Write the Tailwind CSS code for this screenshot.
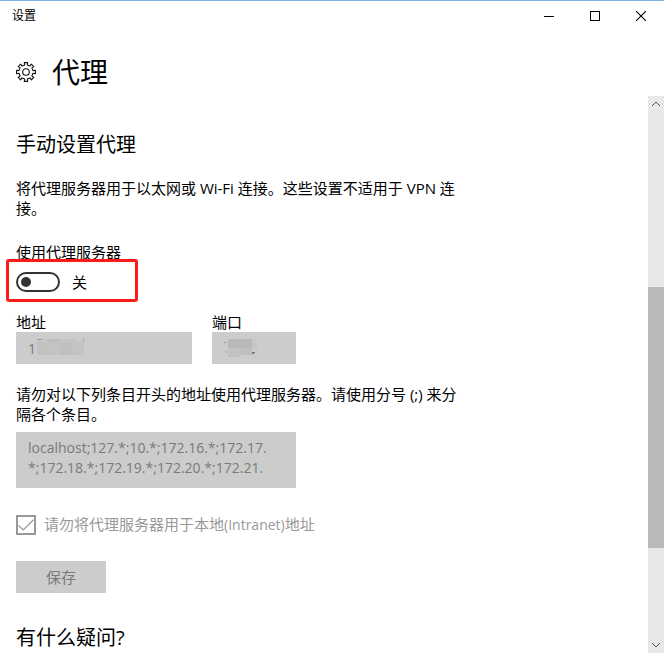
<!DOCTYPE html>
<html lang="zh-CN">
<head>
  <meta charset="UTF-8">
  <meta name="viewport" content="width=device-width, initial-scale=1">
  <title>设置</title>
  <script src="https://cdn.jsdelivr.net/npm/@tailwindcss/browser@4"></script>
</head>
<body class="bg-white text-black h-screen flex flex-col overflow-hidden border-t border-[#7db4ee] font-['Open_Sans','Noto_Sans_CJK_SC',sans-serif] text-[15px] leading-5">
  <!-- Title bar -->
  <header class="flex h-[30px] shrink-0 items-center justify-between">
    <span class="pl-3 text-xs">设置</span>
    <div class="flex h-full">
      <button type="button" aria-label="最小化" class="w-[46px] h-full flex items-center justify-center">
        <svg class="w-[10px] h-[10px]" viewBox="0 0 10 10" shape-rendering="crispEdges"><path d="M0 5.5H10" stroke="#000"/></svg>
      </button>
      <button type="button" aria-label="最大化" class="w-[46px] h-full flex items-center justify-center">
        <svg class="w-[10px] h-[10px]" viewBox="0 0 10 10" shape-rendering="crispEdges"><path d="M.5 .5H9.5V9.5H.5Z" fill="none" stroke="#000"/></svg>
      </button>
      <button type="button" aria-label="关闭" class="w-[46px] h-full flex items-center justify-center">
        <svg class="w-[10px] h-[10px]" viewBox="0 0 10 10"><path d="M0 0L10 10M10 0L0 10" stroke="#000" stroke-width="1.1"/></svg>
      </button>
    </div>
  </header>

  <div class="flex h-[65px] shrink-0 items-start gap-4 px-4 pt-[21px]">
    <svg class="mt-[10px] w-5 h-5" viewBox="0 0 20 20" fill="none" stroke="#111" stroke-width="1.1" stroke-linejoin="round">
      <path d="M8.7 2.9L8.3 .6H11.7L11.3 2.9L14 4L15.3 2.1L17.8 4.6L15.9 5.9L17 8.6L19.4 8.3V11.7L17 11.3L15.9 14L17.8 15.4L15.4 17.8L14 15.9L11.3 17L11.7 19.4H8.3L8.7 17L6 15.9L4.6 17.8L2.2 15.4L4.1 14L3 11.3L.6 11.7V8.3L3 8.6L4.1 5.9L2.2 4.6L4.7 2.1L6 4Z"/>
      <circle cx="10" cy="10" r="3.3"/>
    </svg>
    <h1 class="text-[28px] leading-10">代理</h1>
  </div>

  <div class="flex min-h-0 flex-1">
    <main class="min-w-0 flex-1 overflow-hidden px-4 pt-[37px]">
      <form class="max-w-[444px]">
        <h2 class="text-xl leading-6">手动设置代理</h2>
        <p class="mt-[21px]">将代理服务器用于以太网或 Wi-Fi 连接。这些设置不适用于 VPN 连接。</p>

        <div class="relative mt-6 w-fit">
          <label for="useProxy" class="block">使用代理服务器</label>
          <div class="mt-[10px] flex h-5 items-center gap-3">
            <span class="relative block w-11 h-5">
              <input type="checkbox" role="switch" id="useProxy" class="block w-11 h-5 appearance-none rounded-full border-2 border-[#333]">
              <span class="pointer-events-none absolute left-[5px] top-[5px] w-[10px] h-[10px] rounded-full bg-[#333]"></span>
            </span>
            <span>关</span>
          </div>
          <!-- highlight around the switch -->
          <div class="pointer-events-none absolute -left-[10px] top-[17px] w-[132px] h-[43px] rounded-[3px] border-3 border-[#fb1c18]"></div>
        </div>

        <div class="mt-5 flex gap-5">
          <div class="relative w-[176px]">
            <label for="address" class="block">地址</label>
            <input id="address" type="text" value="1" disabled class="block w-full h-8 bg-[#ccc] px-3 text-sm text-[#7a7a7a]">
            <svg class="absolute left-[21px] top-[26px] w-[48px] h-[18px]" viewBox="0 0 48 18" shape-rendering="crispEdges">
              <path d="M0 1H5V2H0ZM46 1H47V3H46Z" fill="#999"/>
              <path d="M0 3H47V17H0Z" fill="#c3c3c3"/>
              <path d="M8 1H38V5H8Z" fill="#c4c4c4"/>
              <path d="M11 1H23V5H11ZM23 5H35V17H23Z" fill="#bfbfbf"/>
              <path d="M0 5H11V17H0Z" fill="#c1c1c1"/>
            </svg>
          </div>
          <div class="relative w-[84px]">
            <label for="port" class="block">端口</label>
            <input id="port" type="text" disabled class="block w-full h-8 bg-[#ccc] px-3 text-sm text-[#7a7a7a]">
            <svg class="absolute left-3 top-[26px] w-[34px] h-[20px]" viewBox="0 0 34 20" shape-rendering="crispEdges">
              <path d="M0 4H2V5H0ZM2 13H3V15H2Z" fill="#999"/>
              <path d="M28 14H31V15H30V16H28Z" fill="#777"/>
              <path d="M28 1H33V12H28Z" fill="#c6c6c6"/>
              <path d="M4 1H28V10H4Z" fill="#b9b9b9"/>
              <path d="M4 10H16V19H4Z" fill="#c2c2c2"/>
              <path d="M16 10H28V17H16Z" fill="#bfbfbf"/>
            </svg>
          </div>
        </div>

        <label for="bypass" class="mt-5 block">请勿对以下列条目开头的地址使用代理服务器。请使用分号 (;) 来分隔各个条目。</label>
        <textarea id="bypass" rows="2" disabled class="mt-2 block w-[280px] h-14 resize-none overflow-hidden bg-[#ccc] px-3 py-[6px] text-sm leading-5 text-[#7a7a7a]">localhost;127.*;10.*;172.16.*;172.17.
*;172.18.*;172.19.*;172.20.*;172.21.</textarea>

        <div class="mt-[26px] flex items-center gap-2 text-[#999]">
          <span class="relative block w-5 h-5">
            <input type="checkbox" id="local" checked disabled class="block w-5 h-5 appearance-none border-2 border-[#999]">
            <svg class="pointer-events-none absolute inset-0 w-5 h-5" viewBox="0 0 20 20" fill="none" stroke="#999" stroke-width="1.2"><path d="M2.5 10.5L7.2 15L17.5 4.8"/></svg>
          </span>
          <label for="local">请勿将代理服务器用于本地<span class="text-sm leading-5">(Intranet)</span>地址</label>
        </div>

        <button type="submit" disabled class="mt-[26px] block w-[90px] h-8 bg-[#ccc] text-[#7a7a7a]">保存</button>
      </form>
      <h2 class="mt-[33px] text-xl leading-6">有什么疑问?</h2>
    </main>

    <!-- Scroll bar -->
    <div class="flex w-4 shrink-0 flex-col bg-[#e8e8e8]">
      <button type="button" aria-label="向上滚动" class="flex h-4 shrink-0 items-center justify-center">
        <svg class="w-2 h-2" viewBox="0 0 8 8" fill="none" stroke="#505050"><path d="M0 6L4 2L8 6"/></svg>
      </button>
      <div class="grow-175"></div>
      <div class="grow-261 bg-[#b9b9b9]"></div>
      <div class="grow-89"></div>
      <button type="button" aria-label="向下滚动" class="flex h-4 shrink-0 items-center justify-center">
        <svg class="w-2 h-2" viewBox="0 0 8 8" fill="none" stroke="#505050"><path d="M0 2L4 6L8 2"/></svg>
      </button>
    </div>
  </div>
</body>
</html>
